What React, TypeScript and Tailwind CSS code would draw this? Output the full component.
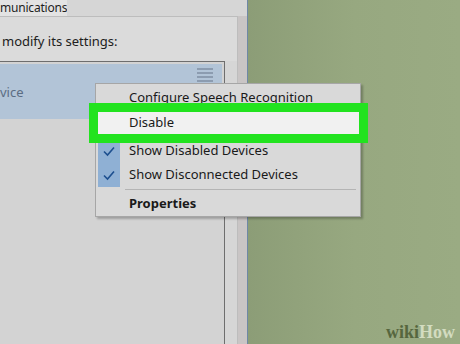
import React from "react";

const Check = () => (
  <svg width="14" height="12" viewBox="0 0 14 12" fill="none">
    <path d="M2 6.5 L5.5 10 L12 2.5" stroke="#1d4f8f" strokeWidth="1.6" />
  </svg>
);

export default function App() {
  const font = { fontFamily: '"Noto Sans", "Open Sans", sans-serif' };
  return (
    <div className="relative w-[460px] h-[344px] overflow-hidden flex" style={font}>
      {/* left window */}
      <div className="w-[248px] h-full flex flex-col bg-[#d5d5d5] border-r border-[#6f88a6]">
        <div className="h-[16px] flex">
          <div className="w-[67px] bg-[#e3e3e3] text-[12px] tracking-[-0.2px] leading-[16px] text-[#1e1e1e] overflow-hidden whitespace-nowrap">
            munications
          </div>
          <div className="flex-1 bg-[#d6d6d6]" />
        </div>
        <div className="flex-1 flex">
          <div className="w-[238px] flex flex-col bg-[#dbdbdb] border-t border-r border-[#bdbdbd]">
            <div className="h-[44px] pt-[14px] pl-[2px] text-[13px] leading-[20px] text-[#202020] whitespace-nowrap">
              modify its settings:
            </div>
            <div className="flex-1 flex">
              <div className="w-[225px] flex flex-col bg-[#d3d3d3] border-t border-r border-[#6e6e6e] pt-[2px] pr-[2px]">
                <div className="h-[55px] bg-[#b2c4d7] flex">
                  <div className="flex-1 pt-[18px] text-[13px] leading-[20px] text-[#5b6d83]">vice</div>
                  <div className="w-[25px] pt-[4px] flex flex-col gap-[2px]">
                    <div className="w-[16px] h-[2px] bg-[#8c9cb0]" />
                    <div className="w-[16px] h-[2px] bg-[#8c9cb0]" />
                    <div className="w-[16px] h-[2px] bg-[#8c9cb0]" />
                    <div className="w-[16px] h-[2px] bg-[#8c9cb0]" />
                  </div>
                </div>
              </div>
              <div className="flex-1 bg-[#d6d6d6]" />
            </div>
          </div>
          <div className="flex-1 bg-[#c9c5c5]" />
        </div>
      </div>
      {/* green desktop */}
      <div className="flex-1 h-full flex items-end justify-end pr-[5px] pb-[2px] bg-gradient-to-r from-[#8c9d77] via-[#97a880] to-[#9aab83]">
        <div className="text-[18px] font-bold leading-[20px]" style={{ fontFamily: '"Liberation Serif", serif' }}>
          <span className="text-[#56663e]">wiki</span>
          <span className="text-[#d3dcc0]">How</span>
        </div>
      </div>

      {/* context menu */}
      <div className="absolute left-[95px] top-[83px] w-[266px] h-[134px] bg-[#d9d9d9] border border-[#a6a6a6] shadow-[2px_2px_2px_rgba(0,0,0,0.25)] flex flex-col pt-[2px] pl-[2px] pr-[1px] text-[13px] text-[#1a1a1a] whitespace-nowrap">
        <div className="h-[24px] flex items-center pl-[31px]">Configure Speech Recognition</div>
        <div className="h-[24px] pt-[2px]">
          <div className="h-[22px] bg-[#f1f1f1] flex items-center pl-[31px]">Disable</div>
        </div>
        <div className="h-[5px]" />
        <div className="h-[24px] flex items-center">
          <div className="w-[22px] h-full bg-[#8fb0d4] flex items-center justify-center"><Check /></div>
          <div className="pl-[9px]">Show Disabled Devices</div>
        </div>
        <div className="h-[24px] flex items-center">
          <div className="w-[22px] h-full bg-[#8fb0d4] flex items-center justify-center"><Check /></div>
          <div className="pl-[9px]">Show Disconnected Devices</div>
        </div>
        <div className="h-[5px] flex items-center pl-[27px] pr-[3px]">
          <div className="w-full h-px bg-[#b4b4b4]" />
        </div>
        <div className="h-[24px] flex items-center pl-[31px] font-bold">Properties</div>
      </div>

      {/* green highlight frame */}
      <div className="absolute left-[89px] top-[103px] w-[279px] h-[40px] border-[9px] border-[#22e31f]" />
    </div>
  );
}
